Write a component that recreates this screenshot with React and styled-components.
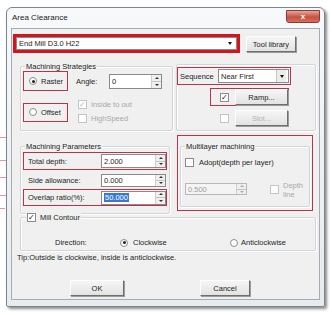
import React from 'react';
import styled, { createGlobalStyle } from 'styled-components';

const GlobalStyle = createGlobalStyle`
  body {
    margin: 0;
    background: #ffffff;
    font-family: "Liberation Sans", Arial, sans-serif;
    font-size: 7.5px;
    color: #1e1e1e;
  }
`;

const Page = styled.div`
  width: 332px;
  height: 315px;
  box-sizing: border-box;
  padding-top: 7px;
  overflow: hidden;
  display: flex;
`;

// faint annotation strokes left of the dialog in the source document
const Margin = styled.div`
  width: 6px;
  flex-shrink: 0;
  display: flex;
  flex-direction: column;
`;

const Stroke = styled.div`
  height: 1px;
  width: ${(p) => p.$w || 6}px;
  margin-top: ${(p) => p.$mt}px;
  background: #dc9aa4;
`;

const Window = styled.div`
  width: 319px;
  height: 300px;
  box-sizing: border-box;
  border: 1px solid #7d858c;
  border-radius: 6px 6px 2px 2px;
  background: linear-gradient(#f7f9fb, #e6ebef);
  box-shadow: 2px 2px 3px rgba(0, 0, 0, 0.45);
  display: flex;
  flex-direction: column;
`;

const TitleBar = styled.div`
  height: 20px;
  display: flex;
  justify-content: space-between;
  padding-left: 5px;
`;

const Title = styled.span`
  font-size: 8px;
  line-height: 20px;
  color: #222;
`;

const CloseBox = styled.div`
  width: 32px;
  height: 11px;
  margin: 2px 4px 0 0;
  border: 1px solid #8a3a38;
  border-radius: 0 0 3px 3px;
  background: linear-gradient(#e8a59a, #c8503f 55%, #d07060);
  color: #fff;
  font-size: 8px;
  font-weight: bold;
  line-height: 11px;
  text-align: center;
`;

const Client = styled.div`
  flex: 1;
  margin: 0 4px 6px 4px;
  border: 1px solid #a4acb4;
  background: #f0f0f0;
  display: flex;
  flex-direction: column;
`;

const Row = styled.div`
  display: flex;
  align-items: flex-start;
  margin-top: ${(p) => p.$mt || 0}px;
  margin-left: ${(p) => p.$ml || 0}px;
`;

const RedBox = styled.div`
  box-sizing: border-box;
  width: ${(p) => p.$w}px;
  height: ${(p) => p.$h}px;
  border: ${(p) => (p.$thick ? '3px solid #d4141f' : '1px solid #b8344c')};
  display: flex;
  align-items: ${(p) => (p.$top ? 'flex-start' : 'center')};
  margin-left: ${(p) => p.$ml || 0}px;
  margin-top: ${(p) => p.$mt || 0}px;
  padding-left: ${(p) => p.$pl || 0}px;
  flex-shrink: 0;
`;

const PlainRow = styled(RedBox)`
  border-color: transparent;
`;

const Combo = styled.div`
  box-sizing: border-box;
  width: ${(p) => p.$w}px;
  height: ${(p) => p.$h}px;
  margin-left: ${(p) => p.$ml || 0}px;
  border: 1px solid #8a8a8a;
  background: #fff;
  display: flex;
  align-items: center;
  justify-content: space-between;
  padding-left: 2px;
`;

const ArrowBtn = styled.div`
  width: 9px;
  height: 100%;
  display: flex;
  align-items: center;
  justify-content: center;
  border-left: ${(p) => (p.$framed ? '1px solid #c8c8c8' : 'none')};
  background: ${(p) => (p.$framed ? '#ececec' : 'transparent')};
  margin-right: 2px;
  &::after {
    content: '';
    border-left: 2.5px solid transparent;
    border-right: 2.5px solid transparent;
    border-top: 3px solid #111;
  }
`;

const Button = styled.div`
  box-sizing: border-box;
  width: ${(p) => p.$w}px;
  height: ${(p) => p.$h || 16}px;
  margin-left: ${(p) => p.$ml || 0}px;
  margin-top: ${(p) => p.$mt || 0}px;
  border: 1px solid;
  border-color: #fdfdfd #6f6f6f #6f6f6f #fdfdfd;
  box-shadow: 1px 1px 0 #9a9a9a;
  background: linear-gradient(#f6f6f6, #e2e2e2);
  color: ${(p) => (p.$disabled ? '#b4b4b4' : '#1e1e1e')};
  display: flex;
  align-items: center;
  justify-content: center;
  flex-shrink: 0;
`;

const Group = styled.div`
  position: relative;
  box-sizing: border-box;
  width: ${(p) => p.$w}px;
  height: ${(p) => p.$h}px;
  margin-left: ${(p) => p.$ml || 0}px;
  margin-top: ${(p) => p.$mt || 0}px;
  border: 1px solid #d2d6da;
  border-radius: 2px;
  box-shadow: inset 1px 1px 0 #fff, 1px 1px 0 #fff;
  padding: ${(p) => p.$pad || '0'};
  flex-shrink: 0;
`;

const Legend = styled.span`
  position: absolute;
  top: -5px;
  left: ${(p) => p.$left || 4}px;
  padding: 0 1px;
  background: #f0f0f0;
  line-height: 9px;
  display: flex;
  align-items: center;
  gap: 4px;
`;

const Radio = styled.span`
  box-sizing: border-box;
  width: 8px;
  height: 8px;
  border-radius: 50%;
  border: 1px solid #8c8c8c;
  background: #fff;
  display: inline-flex;
  align-items: center;
  justify-content: center;
  flex-shrink: 0;
  &::after {
    content: '';
    width: 3px;
    height: 3px;
    border-radius: 50%;
    background: ${(p) => (p.$on ? '#222' : 'transparent')};
  }
`;

const Check = styled.span`
  box-sizing: border-box;
  width: 9px;
  height: 9px;
  margin-left: ${(p) => p.$ml || 0}px;
  margin-top: ${(p) => p.$mt || 0}px;
  border: 1px solid ${(p) => (p.$disabled ? '#c4c4c4' : '#8c8c8c')};
  background: #fff;
  color: ${(p) => (p.$disabled ? '#bcbcbc' : '#222')};
  font-size: 8px;
  line-height: 7px;
  text-align: center;
  flex-shrink: 0;
`;

const Label = styled.span`
  margin-left: ${(p) => p.$ml || 0}px;
  width: ${(p) => (p.$w ? `${p.$w}px` : 'auto')};
  color: ${(p) => (p.$disabled ? '#a8a8a8' : '#1e1e1e')};
  white-space: nowrap;
  flex-shrink: 0;
`;

const TwoLine = styled(Label)`
  line-height: 9px;
  margin-top: -2px;
`;

const Stack = styled.div`
  display: flex;
  flex-direction: column;
  gap: ${(p) => p.$gap || 0}px;
  margin-left: ${(p) => p.$ml || 0}px;
  margin-top: ${(p) => p.$mt || 0}px;
`;

const Line = styled.div`
  display: flex;
  align-items: ${(p) => (p.$top ? 'flex-start' : 'center')};
  margin-top: ${(p) => p.$mt || 0}px;
`;

const Spin = styled.div`
  box-sizing: border-box;
  width: ${(p) => p.$w}px;
  height: ${(p) => p.$h || 14}px;
  border: 1px solid ${(p) => (p.$disabled ? '#b8b8b8' : '#8a8a8a')};
  background: ${(p) => (p.$disabled ? '#f4f4f4' : '#fff')};
  color: ${(p) => (p.$disabled ? '#a0a0a0' : '#1e1e1e')};
  display: flex;
  align-items: center;
  justify-content: space-between;
  padding-left: 2px;
  flex-shrink: 0;
`;

const Selected = styled.span`
  background: #3a78d6;
  color: #fff;
  padding: 0 1px;
`;

const Arrows = styled.div`
  width: 9px;
  height: 100%;
  border-left: 1px solid #cfcfcf;
  display: flex;
  flex-direction: column;
  background: #efefef;
`;

const Half = styled.div`
  flex: 1;
  display: flex;
  align-items: center;
  justify-content: center;
  border-top: ${(p) => (p.$down ? '1px solid #c4c4c4' : 'none')};
  &::after {
    content: '';
    border-left: 2px solid transparent;
    border-right: 2px solid transparent;
    ${(p) => (p.$down ? 'border-top' : 'border-bottom')}: 2px solid ${(p) => (p.$dim ? '#aaa' : '#333')};
  }
`;

const Tip = styled.div`
  margin: 2px 0 0 5px;
  line-height: 9px;
`;

function SpinBox({ w, h, disabled, children }) {
  return (
    <Spin $w={w} $h={h} $disabled={disabled}>
      <span>{children}</span>
      <Arrows>
        <Half $dim={disabled} />
        <Half $down $dim={disabled} />
      </Arrows>
    </Spin>
  );
}

export default function App() {
  return (
    <Page>
      <GlobalStyle />
      <Margin>
        <Stroke $mt={130} />
        <Stroke $mt={22} />
        <Stroke $mt={16} />
        <Stroke $mt={17} />
        <Stroke $mt={12} $w={5} />
      </Margin>
      <Window>
        <TitleBar>
          <Title>Area Clearance</Title>
          <CloseBox>x</CloseBox>
        </TitleBar>
        <Client>
          <Row $mt={5} $ml={1}>
            <RedBox $thick $w={227} $h={19}>
              <Combo $w={221} $h={13}>
                <span>End Mill D3.0 H22</span>
                <ArrowBtn />
              </Combo>
            </RedBox>
            <Button $w={50} $ml={6} $mt={2}>
              Tool library
            </Button>
          </Row>

          <Row $mt={11}>
            <Group $w={153} $h={65} $ml={8} $mt={2} $pad="4px 0 0 2px">
              <Legend>Machining Strategies</Legend>
              <Line>
                <RedBox $w={45} $h={20} $pl={5}>
                  <Radio $on />
                  <Label $ml={4}>Raster</Label>
                </RedBox>
                <Label $ml={8} $w={33}>Angle:</Label>
                <SpinBox w={53} h={15}>0</SpinBox>
              </Line>
              <Line>
                <RedBox $w={45} $h={19} $mt={10} $pl={5}>
                  <Radio />
                  <Label $ml={4}>Offset</Label>
                </RedBox>
                <Stack $ml={10} $mt={9} $gap={5}>
                  <Line>
                    <Check $disabled>✓</Check>
                    <Label $ml={4} $disabled>Inside to out</Label>
                  </Line>
                  <Line>
                    <Check $disabled />
                    <Label $ml={4} $disabled>HighSpeed</Label>
                  </Line>
                </Stack>
              </Line>
            </Group>

            <Group $w={140} $h={67} $ml={3} $pad="2px 0 0 0">
              <RedBox $w={114} $h={18} $pl={2}>
                <Label $w={38}>Sequence</Label>
                <Combo $w={71} $h={14}>
                  <span>Near First</span>
                  <ArrowBtn $framed />
                </Combo>
              </RedBox>
              <RedBox $w={79} $h={18} $ml={33} $mt={3} $pl={9}>
                <Check>✓</Check>
                <Button $w={53} $ml={6}>
                  Ramp...
                </Button>
              </RedBox>
              <PlainRow $w={79} $h={18} $ml={33} $mt={3} $pl={9}>
                <Check $disabled />
                <Button $w={53} $ml={6} $disabled>
                  Slot...
                </Button>
              </PlainRow>
            </Group>
          </Row>

          <Row $mt={4}>
            <Group $w={150} $h={68} $ml={8} $mt={11} $pad="5px 0 0 2px">
              <Legend>Machining Parameters</Legend>
              <RedBox $w={144} $h={18} $pl={4}>
                <Label $w={73}>Total depth:</Label>
                <SpinBox w={65}>2.000</SpinBox>
              </RedBox>
              <PlainRow $w={144} $h={18} $mt={1} $pl={4}>
                <Label $w={73}>Side allowance:</Label>
                <SpinBox w={65} h={13}>0.000</SpinBox>
              </PlainRow>
              <RedBox $w={144} $h={17} $pl={4}>
                <Label $w={73}>Overlap ratio(%):</Label>
                <SpinBox w={65}>
                  <Selected>50.000</Selected>
                </SpinBox>
              </RedBox>
            </Group>

            <RedBox $top $w={136} $h={76} $ml={7}>
              <Group $w={130} $h={61} $ml={2} $mt={10} $pad="11px 0 0 4px">
                <Legend>Multilayer machining</Legend>
                <Line>
                  <Check />
                  <Label $ml={5}>Adopt(depth per layer)</Label>
                </Line>
                <Line $top $mt={16}>
                  <SpinBox w={62} h={12} disabled>0.500</SpinBox>
                  <Check $disabled $ml={23} $mt={2} />
                  <TwoLine $ml={4} $disabled>
                    Depth
                    <br />
                    line
                  </TwoLine>
                </Line>
              </Group>
            </RedBox>
          </Row>

          <Row $mt={3}>
            <Group $w={296} $h={34} $ml={8} $pad="20px 0 0 34px">
              <Legend $left={5}>
                <Check>✓</Check>
                <span>Mill Contour</span>
              </Legend>
              <Line>
                <Label $w={65}>Direction:</Label>
                <Radio $on />
                <Label $ml={5} $w={97}>Clockwise</Label>
                <Radio />
                <Label $ml={3}>Anticlockwise</Label>
              </Line>
            </Group>
          </Row>

          <Tip>Tip:Outside is clockwise, inside is anticlockwise.</Tip>

          <Row $mt={18} $ml={58}>
            <Button $w={54}>OK</Button>
            <Button $w={50} $ml={76}>
              Cancel
            </Button>
          </Row>
        </Client>
      </Window>
    </Page>
  );
}
